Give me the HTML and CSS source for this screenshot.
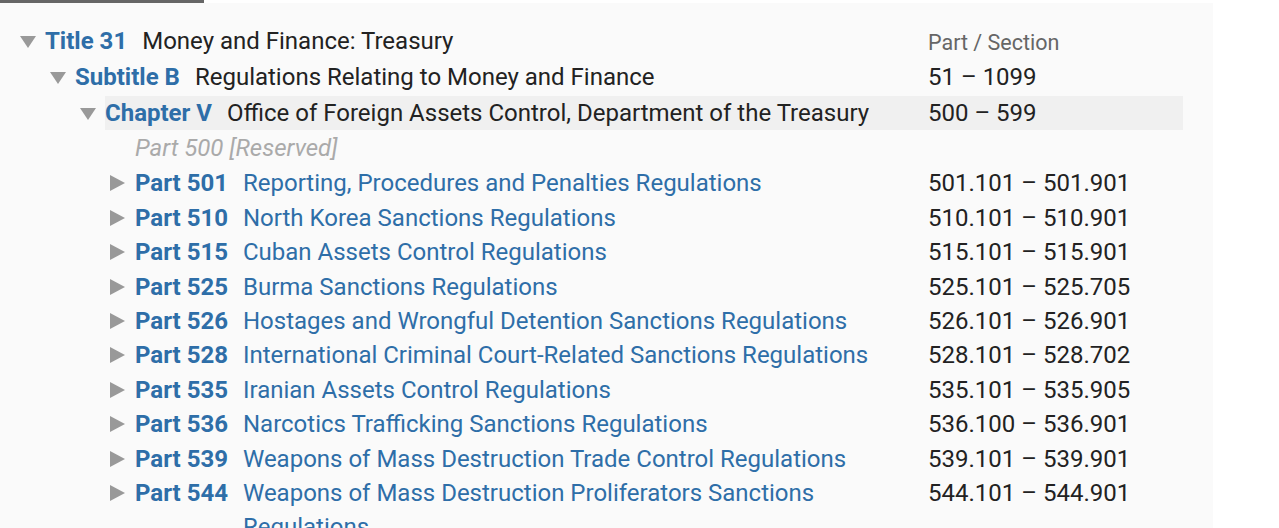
FILE: index.html
```html
<!DOCTYPE html>
<html lang="en">
<head>
    <meta charset="UTF-8">
    <meta name="viewport" content="width=device-width, initial-scale=1.0">
    <title>Title 31 - Chapter V</title>
    <link rel="stylesheet" href="styles.css">
</head>
<body>
    <div class="topbar"></div>

    <div class="browse-panel">
        <!-- Title level -->
        <div class="node level-0">
            <span class="toggle open"></span>
            <div class="node-row">
                <span class="label">Title 31</span>
                <span class="text dark">Money and Finance: Treasury</span>
                <span class="range header">Part / Section</span>
            </div>
        </div>

        <!-- Subtitle level -->
        <div class="node level-1">
            <span class="toggle open"></span>
            <div class="node-row">
                <span class="label">Subtitle B</span>
                <span class="text dark">Regulations Relating to Money and Finance</span>
                <span class="range">51 – 1099</span>
            </div>
        </div>

        <!-- Chapter level -->
        <div class="node level-2">
            <span class="toggle open"></span>
            <div class="node-row current">
                <span class="label">Chapter V</span>
                <span class="text dark">Office of Foreign Assets Control, Department of the Treasury</span>
                <span class="range">500 – 599</span>
            </div>
        </div>

        <!-- Parts -->
        <div class="part level-3 reserved">
            <span class="toggle"></span>
            <div class="node-row">
                <span class="text">Part 500 [Reserved]</span>
                <span class="range"></span>
            </div>
        </div>
        <div class="part level-3">
            <span class="toggle closed"></span>
            <div class="node-row">
                <span class="label">Part 501</span>
                <span class="text">Reporting, Procedures and Penalties Regulations</span>
                <span class="range">501.101 – 501.901</span>
            </div>
        </div>
        <div class="part level-3">
            <span class="toggle closed"></span>
            <div class="node-row">
                <span class="label">Part 510</span>
                <span class="text">North Korea Sanctions Regulations</span>
                <span class="range">510.101 – 510.901</span>
            </div>
        </div>
        <div class="part level-3">
            <span class="toggle closed"></span>
            <div class="node-row">
                <span class="label">Part 515</span>
                <span class="text">Cuban Assets Control Regulations</span>
                <span class="range">515.101 – 515.901</span>
            </div>
        </div>
        <div class="part level-3">
            <span class="toggle closed"></span>
            <div class="node-row">
                <span class="label">Part 525</span>
                <span class="text">Burma Sanctions Regulations</span>
                <span class="range">525.101 – 525.705</span>
            </div>
        </div>
        <div class="part level-3">
            <span class="toggle closed"></span>
            <div class="node-row">
                <span class="label">Part 526</span>
                <span class="text">Hostages and Wrongful Detention Sanctions Regulations</span>
                <span class="range">526.101 – 526.901</span>
            </div>
        </div>
        <div class="part level-3">
            <span class="toggle closed"></span>
            <div class="node-row">
                <span class="label">Part 528</span>
                <span class="text">International Criminal Court-Related Sanctions Regulations</span>
                <span class="range">528.101 – 528.702</span>
            </div>
        </div>
        <div class="part level-3">
            <span class="toggle closed"></span>
            <div class="node-row">
                <span class="label">Part 535</span>
                <span class="text">Iranian Assets Control Regulations</span>
                <span class="range">535.101 – 535.905</span>
            </div>
        </div>
        <div class="part level-3">
            <span class="toggle closed"></span>
            <div class="node-row">
                <span class="label">Part 536</span>
                <span class="text">Narcotics Trafficking Sanctions Regulations</span>
                <span class="range">536.100 – 536.901</span>
            </div>
        </div>
        <div class="part level-3">
            <span class="toggle closed"></span>
            <div class="node-row">
                <span class="label">Part 539</span>
                <span class="text">Weapons of Mass Destruction Trade Control Regulations</span>
                <span class="range">539.101 – 539.901</span>
            </div>
        </div>
        <div class="part level-3">
            <span class="toggle closed"></span>
            <div class="node-row">
                <span class="label">Part 544</span>
                <span class="text">Weapons of Mass Destruction Proliferators Sanctions Regulations</span>
                <span class="range">544.101 – 544.901</span>
            </div>
        </div>
    </div>
</body>
</html>
```

FILE: styles.css
```css
body {
    margin: 0;
    background-color: #ffffff;
    font-family: Roboto, "Liberation Sans", Arial, sans-serif;
    color: #222;
}
.topbar {
    width: 204px;
    height: 3px;
    background-color: #666;
}
.browse-panel {
    width: 1163px;
    padding: 21px 30px 0 20px;
    background-color: #fafafa;
    height: 504px;
    overflow: hidden;
    font-size: 24px;
}
.node, .part {
    display: flex;
    align-items: flex-start;
}
.node {
    line-height: 34px;
    margin-bottom: 2px;
}
.node.level-2 {
    margin-bottom: 1px;
}
.part {
    line-height: 34.4px;
}
.part.reserved {
    margin-bottom: 1px;
}
.level-1 { padding-left: 30px; }
.level-2 { padding-left: 60px; }
.level-3 { padding-left: 90px; }

/* expand / collapse arrows */
.toggle {
    flex: none;
    width: 26px;
    height: 34px;
    position: relative;
}
.toggle.open::before {
    content: "";
    position: absolute;
    left: 0;
    top: 12px;
    border-left: 8px solid transparent;
    border-right: 8px solid transparent;
    border-top: 12px solid #999;
}
.toggle.closed::before {
    content: "";
    position: absolute;
    left: 0;
    top: 9px;
    border-top: 8px solid transparent;
    border-bottom: 8px solid transparent;
    border-left: 15px solid #999;
}
.node-row {
    flex: 1;
    display: flex;
    align-items: flex-start;
    margin-left: -1px;
}
.node-row.current {
    background-color: #f0f0f0;
}
.label {
    flex: none;
    font-weight: 700;
    color: #2e6ea8;
    margin-right: 15px;
}
.text {
    flex: 1;
    color: #2e6ea8;
    padding-right: 16px;
}
.text.dark {
    color: #222;
}
.reserved .text {
    font-style: italic;
    color: #aaa;
}
.range {
    flex: none;
    width: 255px;
    color: #222;
}
.range.header {
    font-size: 21.5px;
    line-height: 30px;
    color: #666;
    padding-top: 4px;
}
```
